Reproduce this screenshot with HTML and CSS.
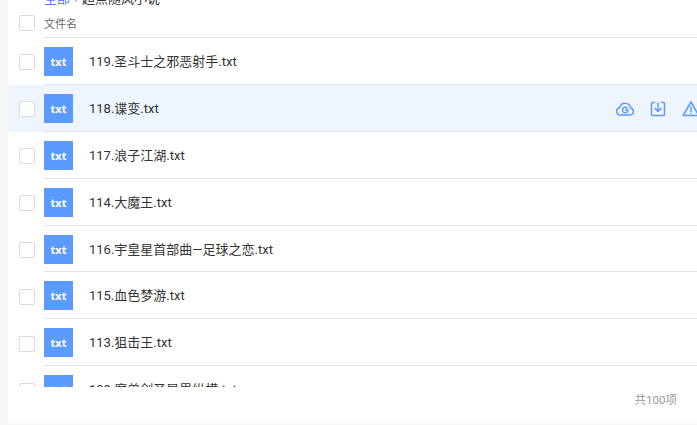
FILE: index.html
```html
<!DOCTYPE html>
<html lang="zh-CN">
<head>
    <meta charset="UTF-8">
    <link rel="stylesheet" href="styles.css">
    <title>文件列表</title>
</head>
<body>
    <div class="panel">
        <div class="crumbs"><span class="crumb-link">全部</span><span class="crumb-sep">›</span>超点随风小说</div>

        <div class="list-head">
            <span class="check"></span>
            <span class="head-name">文件名</span>
        </div>

        <div class="list">
            <div class="row">
                <span class="check"></span>
                <span class="file-icon">txt</span>
                <span class="file-name">119.圣斗士之邪恶射手.txt</span>
            </div>
            <div class="row active">
                <span class="check"></span>
                <span class="file-icon">txt</span>
                <span class="file-name">118.谍变.txt</span>
                <div class="actions">
                    <svg width="20" height="20" viewBox="0 0 20 20" fill="none" stroke="#5b9bff" stroke-width="1.5" stroke-linejoin="round" stroke-linecap="round">
                        <path d="M5.5 16h9.500a3.600 3.600 0 0 0 .6-7.100 5.600 5.600 0 0 0-10.900-.4 3.800 3.800 0 0 0 .8 7.500z"/>
                        <path d="M13 11a2.800 2.800 0 1 1-1-2.100M10.500 11h2.500"/>
                    </svg>
                    <svg width="20" height="20" viewBox="0 0 20 20" fill="none" stroke="#5b9bff" stroke-width="1.5" stroke-linejoin="round" stroke-linecap="round">
                        <path d="M6.500 3.500h-2a1 1 0 0 0-1 1v11a1 1 0 0 0 1 1h11a1 1 0 0 0 1-1v-11a1 1 0 0 0-1-1h-2"/>
                        <path d="M10 4v8M7 9.500l3 3 3-3"/>
                    </svg>
                    <svg width="20" height="20" viewBox="0 0 20 20" fill="none" stroke="#5b9bff" stroke-width="1.500" stroke-linejoin="round" stroke-linecap="round">
                        <path d="M10 3l7.800 13.500h-15.600z"/>
                        <path d="M10 8v4.500M10 14.500v.2"/>
                    </svg>
                </div>
            </div>
            <div class="row">
                <span class="check"></span>
                <span class="file-icon">txt</span>
                <span class="file-name">117.浪子江湖.txt</span>
            </div>
            <div class="row">
                <span class="check"></span>
                <span class="file-icon">txt</span>
                <span class="file-name">114.大魔王.txt</span>
            </div>
            <div class="row">
                <span class="check"></span>
                <span class="file-icon">txt</span>
                <span class="file-name">116.宇皇星首部曲—足球之恋.txt</span>
            </div>
            <div class="row">
                <span class="check"></span>
                <span class="file-icon">txt</span>
                <span class="file-name">115.血色梦游.txt</span>
            </div>
            <div class="row">
                <span class="check"></span>
                <span class="file-icon">txt</span>
                <span class="file-name">113.狙击王.txt</span>
            </div>
            <div class="row">
                <span class="check"></span>
                <span class="file-icon">txt</span>
                <span class="file-name">109.魔兽剑圣异界纵横.txt</span>
            </div>
        </div>

        <div class="total">共100项</div>
    </div>
</body>
</html>
```

FILE: styles.css
```css
body {
    margin: 0;
    overflow: hidden;
    background: #f7f7f7;
    font-family: Roboto, "Noto Sans CJK SC", sans-serif;
    color: #333;
}

.panel {
    margin-left: 8px;
    height: 423px;
    background: #fff;
    display: flex;
    flex-direction: column;
    overflow: hidden;
}

.crumbs {
    height: 8px;
    margin-top: -7px;
    padding-left: 36px;
    font-size: 13px;
    line-height: 12px;
    color: #333;
    flex: none;
}

.crumb-link {
    color: #5b7cff;
}

.crumb-sep {
    margin: 0 4px;
    color: #999;
}

.list-head {
    height: 37px;
    box-sizing: border-box;
    padding-top: 7px;
    display: flex;
    align-items: center;
    flex: none;
    position: relative;
}

.list-head::after {
    content: "";
    position: absolute;
    left: 36px;
    right: 0;
    bottom: 0;
    height: 1px;
    background: #e2e2e2;
}

.head-name {
    margin-left: 9px;
    font-size: 11px;
    color: #666;
}

.check {
    width: 14px;
    height: 14px;
    margin-left: 11px;
    border: 1px solid #dcdcdc;
    border-radius: 2px;
    background: #fff;
    flex: none;
}

.list {
    height: 349px;
    overflow: hidden;
    flex: none;
}

.row {
    height: 46.9px;
    box-sizing: border-box;
    display: flex;
    align-items: center;
    position: relative;
}

.row::after {
    content: "";
    position: absolute;
    left: 36px;
    right: 0;
    bottom: 0;
    height: 1px;
    background: #e2e2e2;
}

.row.active {
    background: #eef5fe;
}

.row .check {
    margin-top: 2px;
}

.file-icon {
    width: 29px;
    height: 29px;
    margin-left: 9px;
    background: #5b9bff;
    color: #fff;
    font-family: "Open Sans", sans-serif;
    font-size: 11px;
    font-weight: 700;
    line-height: 29px;
    text-align: center;
    flex: none;
}

.file-name {
    margin-left: 16px;
    margin-bottom: 2px;
    font-size: 13px;
    color: #333;
}

.actions {
    margin-left: auto;
    margin-right: -4px;
    margin-top: 2px;
    display: flex;
    gap: 13px;
}

.total {
    margin-top: 4px;
    padding-right: 20px;
    text-align: right;
    font-size: 11.5px;
    color: #999;
}
```
